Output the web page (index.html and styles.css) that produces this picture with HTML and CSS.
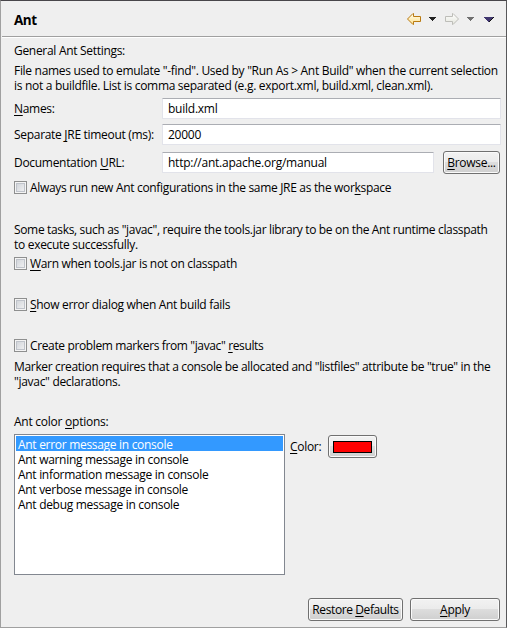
FILE: index.html
```
<!DOCTYPE html>
<html lang="en">
<head>
<meta charset="utf-8">
<title>Ant</title>
<link rel="stylesheet" href="styles.css">
</head>
<body>
<main class="page">
  <header class="header">
    <h1>Ant</h1>
    <svg class="nav" width="92" height="16" viewBox="0 0 92 16" shape-rendering="crispEdges">
      <defs>
        <linearGradient id="gold" x1="0" y1="0" x2="0" y2="1"><stop offset="0" stop-color="#fffef0"/><stop offset="1" stop-color="#ffe08a"/></linearGradient>
        <linearGradient id="pale" x1="0" y1="0" x2="0" y2="1"><stop offset="0" stop-color="#ffffff"/><stop offset="1" stop-color="#e4e5dc"/></linearGradient>
      </defs>
      <path shape-rendering="auto" d="M1.500 8 L7 2.500 H7.500 V5.500 H14.500 V10.500 H7.500 V13.500 H7 Z" fill="url(#gold)" stroke="#b97a12"/>
      <path d="M23 6h7v1h-1v1h-1v1h-1v1h-1v-1h-1v-1h-1v-1h-1z" fill="#222"/>
      <path shape-rendering="auto" d="M52.500 8 L47 2.500 H46.500 V5.500 H39.500 V10.500 H46.500 V13.500 H47 Z" fill="url(#pale)" stroke="#bdbdb8"/>
      <path d="M61 6h7v1h-1v1h-1v1h-1v1h-1v-1h-1v-1h-1v-1h-1z" fill="#707070"/>
      <path d="M78 6h10v1h-1v1h-1v1h-1v1h-1v1h-2v-1h-1v-1h-1v-1h-1v-1h-1z" fill="#40366f"/>
      <path d="M87 6h1v1h-1v1h-1v1h-1v1h-1v1h-1v-1h1v-1h1v-1h1v-1h1z" fill="#111"/>
    </svg>
  </header>
  <section class="content">
    <p class="intro"><span>General Ant Settings:</span></p>
    <p class="help"><span class="w1">File names used to emulate "-find". Used by "Run As &gt; Ant Build" when the current selection</span><br><span class="w2">is not a buildfile. List is comma separated (e.g. export.xml, build.xml, clean.xml).</span></p>
    <div class="field names"><label><u>N</u>ames:</label><div class="input">build.xml</div></div>
    <div class="field timeout"><label>Separate <u>J</u>RE timeout (ms):</label><div class="input">20000</div></div>
    <div class="field docs"><label>Documentation <u>U</u>RL:</label><div class="input">http://ant.apache.org/manual</div><div class="button browse"><span><u>B</u>rowse...</span></div></div>
    <div class="check always"><i class="box"></i><span>Always run new Ant configurations in the same JRE as the wor<u>k</u>space</span></div>
    <p class="tasks"><span class="w3">Some tasks, such as "javac", require the tools.jar library to be on the Ant runtime classpath</span><br><span>to execute successfully.</span></p>
    <div class="check warn"><i class="box"></i><span><u>W</u>arn when tools.jar is not on classpath</span></div>
    <div class="check show"><i class="box"></i><span><u>S</u>how error dialog when Ant build fails</span></div>
    <div class="check create"><i class="box"></i><span>Create problem markers from "javac" <u>r</u>esults</span></div>
    <p class="marker"><span class="w4">Marker creation requires that a console be allocated and "listfiles" attribute be "true" in the</span><br><span>"javac" declarations.</span></p>
    <p class="options"><span>Ant color <u>o</u>ptions:</span></p>
    <div class="colors">
      <ul class="list">
        <li class="selected">Ant error message in console</li>
        <li>Ant warning message in console</li>
        <li>Ant information message in console</li>
        <li>Ant verbose message in console</li>
        <li>Ant debug message in console</li>
      </ul>
      <span class="color-label"><u>C</u>olor:</span>
      <div class="button color"><i class="swatch"></i></div>
    </div>
    <div class="actions">
      <div class="button restore"><span>Restore <u>D</u>efaults</span></div>
      <div class="button apply"><span><u>A</u>pply</span></div>
    </div>
  </section>
</main>
</body>
</html>
```
FILE: styles.css
```
* { box-sizing: border-box; }
body { margin: 0; background: #efefef; color: #000; font: 12px/15px "Open Sans", "Noto Sans", sans-serif; letter-spacing: -0.3px; white-space: nowrap; }
p, h1, ul { margin: 0; padding: 0; }
u { text-underline-offset: 2px; text-decoration-thickness: 1px; text-decoration-skip-ink: none; }
.page { width: 507px; height: 628px; overflow: hidden; border: 1px solid #a0a0a0; border-top-color: #48464a; border-right-color: #58585a; }
.header { height: 37px; margin-left: 1px; padding: 2px 8px 0 12px; border-bottom: 1px solid #fff; box-shadow: inset 0 -1px #a0a0a0; display: flex; align-items: center; justify-content: space-between; }
h1 { font-size: 13.5px; line-height: 18px; font-weight: 700; letter-spacing: -0.5px; }
.nav { display: block; position: relative; top: -1px; }
.content { padding: 5px 6px 0 13px; }
.intro { letter-spacing: -0.3px; }
.help { margin-top: 5px; }
.w2 { letter-spacing: -0.3px; }
.w3 { letter-spacing: -0.34px; }
.w4 { letter-spacing: -0.33px; }
.field { display: flex; align-items: center; height: 21px; margin-right: -1px; }
.field label { width: 148px; }
.input { flex: 1; height: 21px; padding: 2px 5px; background: #fff; border: 1px solid #e2e3ea; border-top-color: #abadb3; border-radius: 1px; letter-spacing: -0.24px; }
.names { margin-top: 5px; }
.timeout { margin-top: 5px; }
.docs { margin-top: 7px; }
.button { height: 23px; border: 1px solid #707070; border-radius: 3px; background: linear-gradient(#f2f2f2 0%, #ebebeb 48%, #dddddd 50%, #cfcfcf 100%); box-shadow: inset 0 0 0 1px #fafafa; display: flex; align-items: center; justify-content: center; }
.browse { width: 57px; margin: 0 1px 0 9px; }
.check { display: flex; align-items: center; height: 15px; gap: 3px; letter-spacing: -0.32px; }
.box { width: 13px; height: 13px; border: 1px solid #8e8f8f; background: linear-gradient(135deg, #cbcfd5, #f6f6f6); box-shadow: inset 0 0 0 1px #f4f4f4, inset 0 0 0 2px #bfc3ca; }
.always { margin-top: 7px; }
.tasks { margin-top: 27px; }
.warn { margin-top: 4px; }
.show { margin-top: 26px; }
.create { margin-top: 26px; letter-spacing: -0.37px; }
.marker { margin-top: 6px; }
.options { margin-top: 25px; letter-spacing: -0.25px; }
.colors { display: flex; margin-top: 5px; height: 141px; }
.list { width: 271px; height: 141px; list-style: none; background: #fff; border: 1px solid #828790; padding: 1px; }
.list li { height: 15px; padding-left: 2px; line-height: 17px; letter-spacing: -0.3px; }
.list .selected { background: #3399ff; color: #fff; }
.color-label { margin: 5px 0 0 5px; width: 38px; }
.color { width: 49px; margin-top: 1px; }
.swatch { width: 39px; height: 12px; border: 1px solid #000; background: #f00; }
.actions { display: flex; justify-content: flex-end; gap: 7px; margin-top: 23px; }
.restore { width: 95px; letter-spacing: -0.4px; }
.apply { width: 90px; }
```
